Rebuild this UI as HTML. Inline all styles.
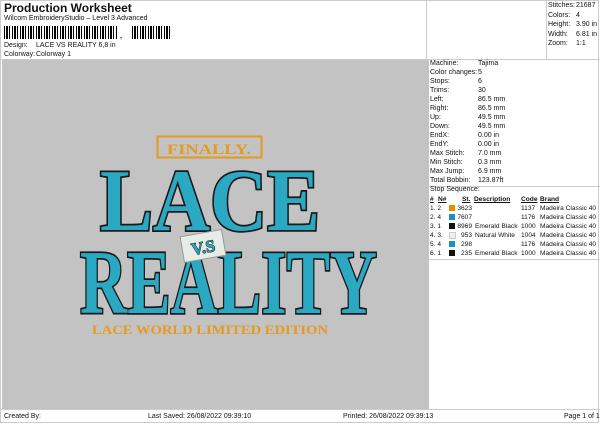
<!DOCTYPE html>
<html><head><style>
body{margin:0;width:600px;height:424px;background:#fff;font-family:"Liberation Sans",sans-serif;color:#111;position:relative;overflow:hidden}
.a{position:absolute;font-size:7px;white-space:nowrap;line-height:9px}
.t{font-size:6.6px}
</style></head><body>
<div class="a" style="left:4px;top:1px;font-size:12px;font-weight:bold;line-height:14px">Production Worksheet</div>
<div class="a" style="left:4px;top:14px">Wilcom EmbroideryStudio – Level 3 Advanced</div>
<div style="position:absolute;left:4px;top:26px;width:168px;height:13px;background:repeating-linear-gradient(90deg,#000 0 1px,#fff 1px 2px,#000 2px 4px,#fff 4px 5px,#000 5px 6px,#fff 6px 8px)"></div>
<div style="position:absolute;left:117px;top:26px;width:15px;height:14px;background:#fff"></div>
<div class="a" style="left:120px;top:32px;font-weight:bold">,</div>
<div class="a" style="left:4px;top:41px">Design:</div><div class="a" style="left:36px;top:41px">LACE VS REALITY 6,8 in</div>
<div class="a" style="left:4px;top:50px">Colorway:</div><div class="a" style="left:36px;top:50px">Colorway 1</div>
<div style="position:absolute;left:0;top:0;width:599px;height:423px;border:1px solid #ccc;box-sizing:border-box;pointer-events:none"></div>
<div style="position:absolute;left:426px;top:0;width:1px;height:59px;background:#ccc"></div>
<div style="position:absolute;left:546px;top:0;width:1px;height:59px;background:#ccc"></div>
<div style="position:absolute;left:0;top:59px;width:600px;height:1px;background:#ccc"></div>
<div style="position:absolute;left:2px;top:60px;width:423px;height:349px;background:#c3c3c3"></div>
<div style="position:absolute;left:425px;top:60px;width:4px;height:349px;background:#c3c3c3"></div>
<div style="position:absolute;left:0;top:409px;width:600px;height:1px;background:#ccc"></div>
<div style="position:absolute;left:429px;top:186px;width:171px;height:1px;background:#ccc"></div>
<div style="position:absolute;left:429px;top:259px;width:171px;height:1px;background:#ccc"></div>
<div class="a" style="left:548px;top:1px;line-height:9.5px">Stitches:<br>Colors:<br>Height:<br>Width:<br>Zoom:</div>
<div class="a" style="left:576px;top:1px;line-height:9.5px">21687<br>4<br>3.90 in<br>6.81 in<br>1:1</div>
<div class="a" style="left:430px;top:59px;line-height:9px">Machine:<br>Color changes:<br>Stops:<br>Trims:<br>Left:<br>Right:<br>Up:<br>Down:<br>EndX:<br>EndY:<br>Max Stitch:<br>Min Stitch:<br>Max Jump:<br>Total Bobbin:<br>Stop Sequence:</div>
<div class="a" style="left:478px;top:59px;line-height:9px">Tajima<br>5<br>6<br>30<br>86.5 mm<br>86.5 mm<br>49.5 mm<br>49.5 mm<br>0.00 in<br>0.00 in<br>7.0 mm<br>0.3 mm<br>6.9 mm<br>123.87ft</div>
<div class="a t" style="left:430px;top:195px;font-weight:bold;text-decoration:underline">#</div>
<div class="a t" style="left:438px;top:195px;font-weight:bold;text-decoration:underline">N#</div>
<div class="a t" style="left:462px;top:195px;font-weight:bold;text-decoration:underline">St.</div>
<div class="a t" style="left:474px;top:195px;font-weight:bold;text-decoration:underline">Description</div>
<div class="a t" style="left:521px;top:195px;font-weight:bold;text-decoration:underline">Code</div>
<div class="a t" style="left:540px;top:195px;font-weight:bold;text-decoration:underline">Brand</div>
<div class="a t" style="left:430px;top:204px;line-height:9px">1. 2<br>2. 4<br>3. 1<br>4. 3.<br>5. 4<br>6. 1</div>
<div style="position:absolute;left:449px;top:205px;width:6px;height:6px;background:#f28a00"></div>
<div style="position:absolute;left:449px;top:214px;width:6px;height:6px;background:#1a8fc6"></div>
<div style="position:absolute;left:449px;top:223px;width:6px;height:6px;background:#111"></div>
<div style="position:absolute;left:449px;top:232px;width:5px;height:5px;background:#eee;border:1px solid #ccc"></div>
<div style="position:absolute;left:449px;top:241px;width:6px;height:6px;background:#1a8fc6"></div>
<div style="position:absolute;left:449px;top:250px;width:6px;height:6px;background:#111"></div>
<div class="a t" style="left:455px;top:204px;width:17px;text-align:right">3623<br>7607<br>8969<br>953<br>298<br>235</div>
<div class="a t" style="left:475px;top:204px">&nbsp;<br>&nbsp;<br>Emerald Black<br>Natural White<br>&nbsp;<br>Emerald Black</div>
<div class="a t" style="left:521px;top:204px">1137<br>1176<br>1000<br>1004<br>1176<br>1000</div>
<div class="a t" style="left:540px;top:204px">Madeira Classic 40<br>Madeira Classic 40<br>Madeira Classic 40<br>Madeira Classic 40<br>Madeira Classic 40<br>Madeira Classic 40</div>
<div class="a" style="left:4px;top:412px">Created By:</div>
<div class="a" style="left:148px;top:412px">Last Saved: 26/08/2022 09:39:10</div>
<div class="a" style="left:343px;top:412px">Printed: 26/08/2022 09:39:13</div>
<div class="a" style="left:564px;top:412px">Page 1 of 1</div>
<svg style="position:absolute;left:0;top:0" width="600" height="424">
<rect x="157.5" y="136.5" width="104" height="21" fill="none" stroke="#e69a1e" stroke-width="2"/>
<text x="209" y="154" text-anchor="middle" font-family="Liberation Serif,serif" font-weight="bold" font-size="15" fill="#e69a1e" textLength="84" lengthAdjust="spacingAndGlyphs">FINALLY.</text>
<g font-family="Liberation Serif,serif" font-weight="bold" fill="#2ba8c2" stroke="#1a1a1a" stroke-width="3.5" paint-order="stroke">
<text x="100" y="230" font-size="88" textLength="220" lengthAdjust="spacingAndGlyphs">LACE</text>
<text x="80" y="313" font-size="91" textLength="297" lengthAdjust="spacingAndGlyphs">REALITY</text>
</g>
<g transform="rotate(-10 203 246)">
<rect x="182" y="233" width="42" height="26" fill="#e6ece6" stroke="#999" stroke-width="1"/>
<text x="203" y="253" text-anchor="middle" font-family="Liberation Serif,serif" font-weight="bold" font-size="17" fill="#2ba8c2" stroke="#1a1a1a" stroke-width="1" paint-order="stroke">V.S</text>
</g>
<text x="92" y="334" font-family="Liberation Serif,serif" font-weight="bold" font-size="13" fill="#e69a1e" textLength="236" lengthAdjust="spacingAndGlyphs">LACE WORLD LIMITED EDITION</text>
</svg>
</body></html>
